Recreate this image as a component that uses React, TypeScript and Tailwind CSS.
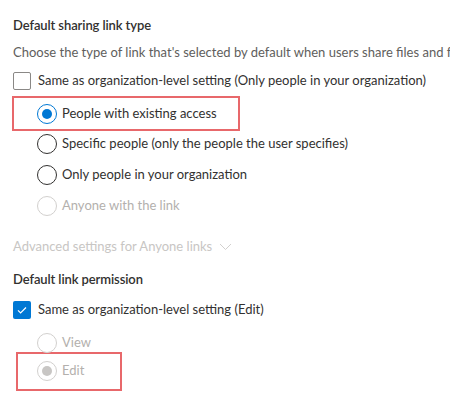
import { FC, ReactNode } from "react";

const font = { fontFamily: 'Lato, "Noto Sans", sans-serif' };

interface RadioProps {
  label: string;
  checked?: boolean;
  disabled?: boolean;
}

const Radio: FC<RadioProps> = ({ label, checked, disabled }) => {
  const ring = checked && !disabled
    ? "border-[#0078d4]"
    : disabled
      ? "border-[#d2d0ce]"
      : "border-[#323130]";
  const dot = disabled ? "bg-[#c8c6c4]" : "bg-[#0078d4]";
  return (
    <div className="flex items-center h-[31px]">
      <span
        className={`w-[20px] h-[20px] shrink-0 rounded-full border bg-white flex items-center justify-center ${ring}`}
      >
        {checked && <span className={`w-[10px] h-[10px] rounded-full ${dot}`} />}
      </span>
      <span
        className={`ml-[5px] text-[13px] whitespace-nowrap ${disabled ? "text-[#b3b0ad]" : "text-[#323130]"}`}
      >
        {label}
      </span>
    </div>
  );
};

const Checkbox: FC<{ label: string; checked?: boolean }> = ({ label, checked }) => (
  <div className="flex items-center h-[30px]">
    {checked ? (
      <span className="w-[18px] h-[18px] shrink-0 rounded-[2px] bg-[#0078d4] flex items-center justify-center">
        <svg width="12" height="12" viewBox="0 0 12 12" fill="none">
          <path d="M2 6.3l2.6 2.6L10 3.5" stroke="white" strokeWidth="1.2" />
        </svg>
      </span>
    ) : (
      <span className="w-[18px] h-[18px] shrink-0 rounded-[2px] border border-[#8a8886] bg-white" />
    )}
    <span className="ml-[7px] text-[13px] text-[#323130] whitespace-nowrap">{label}</span>
  </div>
);

const Highlight: FC<{ children: ReactNode; className: string }> = ({ children, className }) => (
  <div className={`border-2 border-[#e8686b] ${className}`}>{children}</div>
);

export default function App() {
  return (
    <div className="w-[450px] h-[409px] bg-white overflow-hidden pl-[13px] pt-[14px]" style={font}>
      <h3 className="text-[13px] font-semibold tracking-[-0.1px] text-[#323130] leading-[22px]">
        Default sharing link type
      </h3>
      <p className="mt-[6px] text-[13px] text-[#605e5c] whitespace-nowrap leading-[20px]">
        Choose the type of link that's selected by default when users share files and folders
      </p>
      <div className="mt-[4px]">
        <Checkbox label="Same as organization-level setting (Only people in your organization)" />
      </div>
      <Highlight className="-ml-[1px] w-[228px] h-[35px] pl-[23px] flex items-center">
        <Radio label="People with existing access" checked />
      </Highlight>
      <div className="pl-[24px] -mt-[3px]">
        <Radio label="Specific people (only the people the user specifies)" />
        <Radio label="Only people in your organization" />
        <Radio label="Anyone with the link" disabled />
      </div>
      <div className="mt-[16px] flex items-center text-[13px] text-[#c8c6c4] whitespace-nowrap">
        Advanced settings for Anyone links
        <svg className="ml-[7px]" width="13" height="8" viewBox="0 0 13 8" fill="none">
          <path d="M1 1l5.5 5.5L12 1" stroke="#d2d0ce" strokeWidth="1" />
        </svg>
      </div>
      <h3 className="mt-[11px] text-[13px] font-semibold tracking-[-0.1px] text-[#323130] leading-[22px]">
        Default link permission
      </h3>
      <div className="mt-[5px]">
        <Checkbox label="Same as organization-level setting (Edit)" checked />
      </div>
      <div className="pl-[24px] mt-[3px]">
        <Radio label="View" disabled />
      </div>
      <Highlight className="-mt-[7px] ml-[3px] w-[106px] h-[39px] pl-[19px] flex items-center">
        <Radio label="Edit" checked disabled />
      </Highlight>
    </div>
  );
}
